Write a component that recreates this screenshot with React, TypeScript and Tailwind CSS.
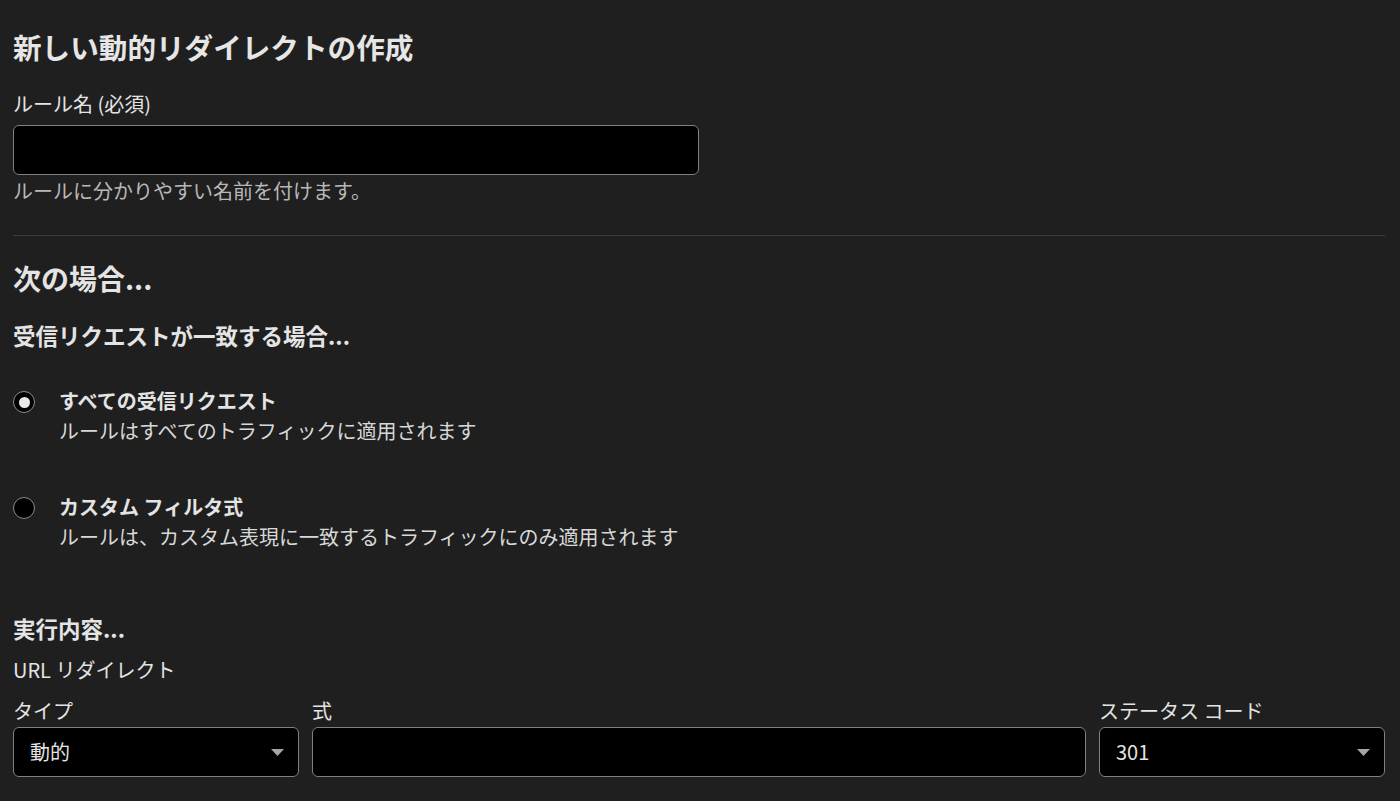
import { useState } from "react"

const font = { fontFamily: '"Noto Sans CJK JP", "Noto Sans", sans-serif' }

function Radio({ checked }: { checked: boolean }) {
  return (
    <span className="mt-[5px] flex h-[22px] w-[22px] shrink-0 items-center justify-center rounded-full border border-[#8c8c8c] bg-black">
      {checked && <span className="h-[11px] w-[11px] rounded-full bg-[#e8e8e8]" />}
    </span>
  )
}

function Caret() {
  return (
    <svg width="13" height="7" viewBox="0 0 13 7" className="shrink-0">
      <path d="M0 0 H13 L6.5 7 Z" fill="#a6a6a6" />
    </svg>
  )
}

export default function App() {
  const [choice, setChoice] = useState("all")

  return (
    <div className="min-h-[801px] bg-[#1f1f1f] px-[13px] pt-[29px] text-[#e4e4e4]" style={font}>
      <h1 className="text-[28.6px] font-bold leading-[36px] text-[#e6e6e6]">新しい動的リダイレクトの作成</h1>

      {/* rule name */}
      <label className="mt-6 block text-[20px] leading-[30px]">ルール名 (必須)</label>
      <input className="mt-[6px] block h-[50px] w-[686px] rounded-[6px] border border-[#808080] bg-black px-4 text-[20px] text-white outline-none" />
      <p className="mt-px text-[20px] leading-[30px] text-[#b8b8b8]">ルールに分かりやすい名前を付けます。</p>

      <div className="mt-[29px] h-px w-[1372px] bg-[#3b3b3b]" />

      <h2 className="mt-6 text-[28px] font-bold leading-[36px]">次の場合...</h2>
      <h3 className="mt-[23px] text-[22.5px] font-bold leading-[32px]">受信リクエストが一致する場合...</h3>

      <div className="mt-[35px] flex flex-col gap-[46px]">
        <div className="flex cursor-pointer gap-6" onClick={() => setChoice("all")}>
          <Radio checked={choice === "all"} />
          <div>
            <div className="text-[20px] font-bold leading-[30px]">すべての受信リクエスト</div>
            <div className="text-[20px] leading-[30px] text-[#d8d8d8]">ルールはすべてのトラフィックに適用されます</div>
          </div>
        </div>
        <div className="flex cursor-pointer gap-6" onClick={() => setChoice("custom")}>
          <Radio checked={choice === "custom"} />
          <div>
            <div className="text-[20px] font-bold leading-[30px]">カスタム フィルタ式</div>
            <div className="text-[20px] leading-[30px] text-[#d8d8d8]">ルールは、カスタム表現に一致するトラフィックにのみ適用されます</div>
          </div>
        </div>
      </div>

      <h3 className="mt-[60px] text-[22.5px] font-bold leading-[32px]">実行内容...</h3>
      <div className="mt-[11px] text-[20px] leading-[30px]">URL リダイレクト</div>

      <div className="mt-[11px] flex w-[1372px] gap-[13px]">
        <div className="w-[286px]">
          <div className="text-[20px] leading-[30px]">タイプ</div>
          <div className="mt-px flex h-[50px] items-center justify-between rounded-[6px] border border-[#808080] bg-black pl-4 pr-[14px] text-[20px]">
            <span>動的</span>
            <Caret />
          </div>
        </div>
        <div className="flex-1">
          <div className="text-[20px] leading-[30px]">式</div>
          <input className="mt-px block h-[50px] w-full rounded-[6px] border border-[#808080] bg-black px-4 text-[20px] text-white outline-none" />
        </div>
        <div className="w-[286px]">
          <div className="text-[20px] leading-[30px]">ステータス コード</div>
          <div className="mt-px flex h-[50px] items-center justify-between rounded-[6px] border border-[#808080] bg-black pl-4 pr-[14px] text-[20px]">
            <span>301</span>
            <Caret />
          </div>
        </div>
      </div>
    </div>
  )
}
